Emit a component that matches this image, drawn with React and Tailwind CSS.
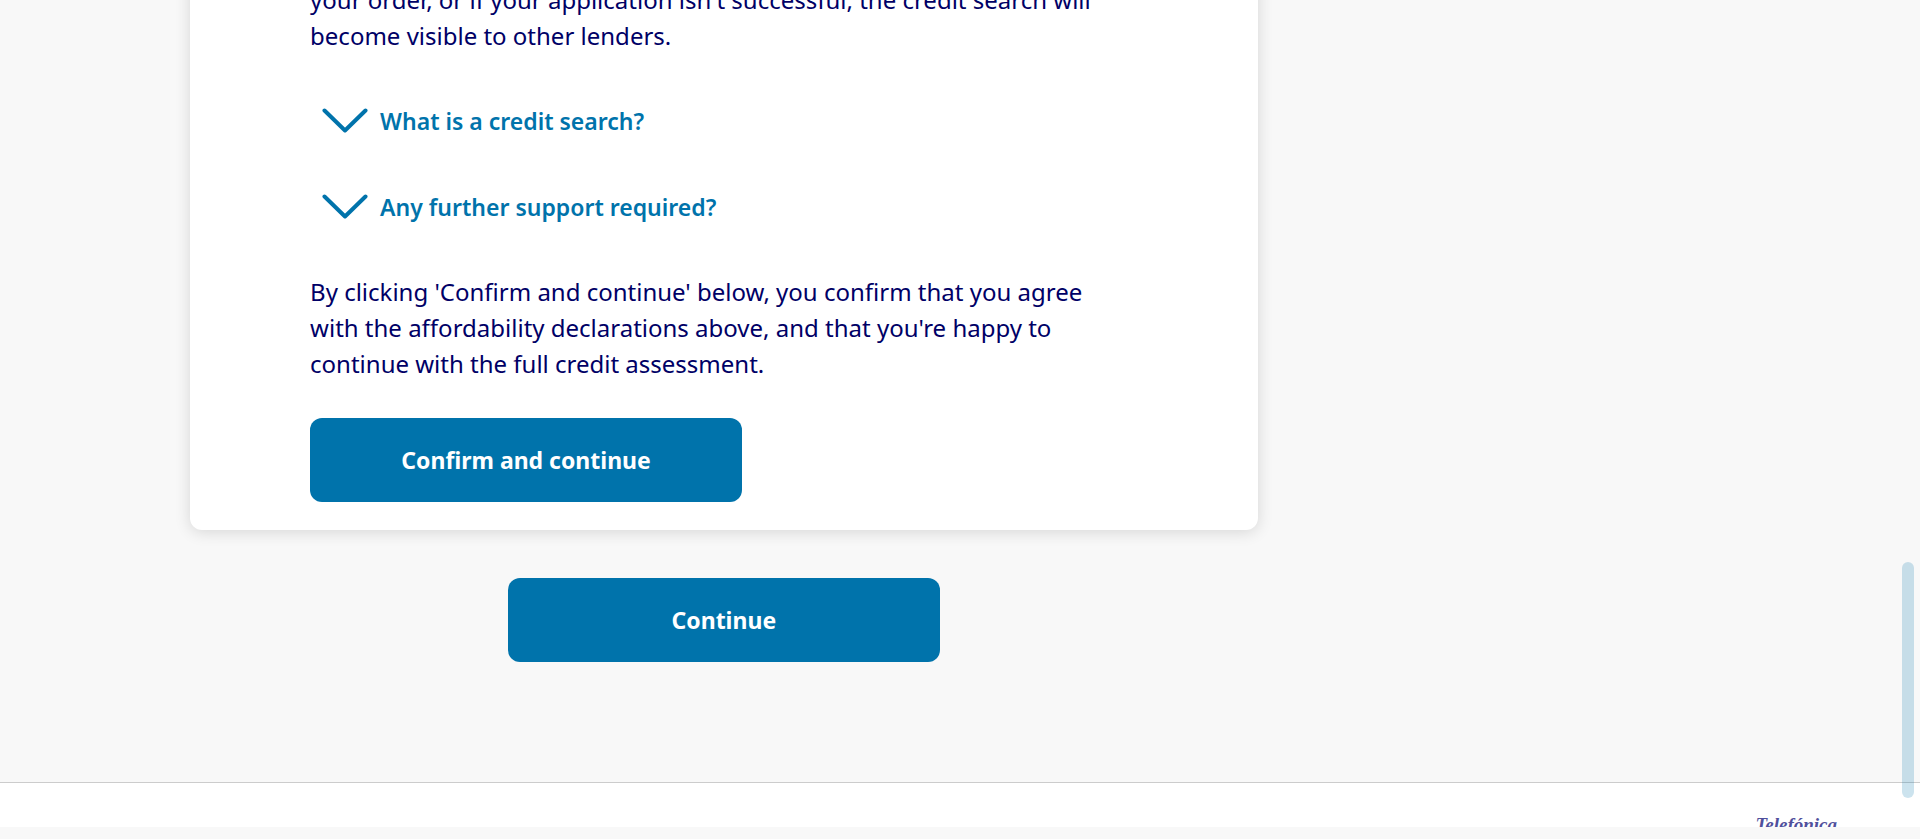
function Disclosure({ children }) {
  return (
    <button
      type="button"
      aria-expanded="false"
      className="flex h-[86px] items-center gap-3 self-start pl-3 text-left text-[23px] leading-9 font-semibold text-[#0073ab]"
    >
      <svg width="46" height="26" viewBox="0 0 46 26" fill="none" aria-hidden="true" className="shrink-0">
        <path
          d="M2.5 2.5 23 22.5 43.5 2.5"
          stroke="currentColor"
          strokeWidth="4"
          strokeLinecap="round"
          strokeLinejoin="round"
        />
      </svg>
      <span>{children}</span>
    </button>
  );
}

function PrimaryButton({ children }) {
  return (
    <button
      type="button"
      className="h-21 w-full max-w-[432px] rounded-xl bg-[#0073ab] text-[23px] leading-9 font-bold text-white"
    >
      {children}
    </button>
  );
}

export default function App() {
  return (
    <div className="relative flex min-h-screen flex-col overflow-hidden bg-[#f8f8f8] font-['Noto_Sans','Open_Sans',sans-serif] text-[24px] leading-9 text-[#000066]">
      <main className="grow pr-[34.5%] pb-[120px] pl-[9.9%]">
        <section className="-mt-[18px] flex flex-col rounded-b-xl bg-white pr-[148px] pb-7 pl-[120px] shadow-[0_2px_16px_rgba(0,0,0,0.14)]">
          <p className="mb-6">
            your order, or if your application isn't successful, the credit search will become visible to other lenders.
          </p>
          <Disclosure>What is a credit search?</Disclosure>
          <Disclosure>Any further support required?</Disclosure>
          <p className="mt-6 mb-9">
            By clicking 'Confirm and continue' below, you confirm that you agree with the affordability declarations
            above, and that you're happy to continue with the full credit assessment.
          </p>
          <PrimaryButton>Confirm and continue</PrimaryButton>
        </section>
        <div className="mt-12 flex justify-center">
          <PrimaryButton>Continue</PrimaryButton>
        </div>
      </main>
      <footer className="mb-3 flex h-[45px] items-start justify-end overflow-hidden border-t border-[#cccccc] bg-white pt-7 pr-[83px]">
        <span className="font-['Liberation_Serif',serif] text-[19px] leading-7 font-bold text-[#50509c] italic">
          Telefónica
        </span>
      </footer>
      <div className="absolute top-[562px] right-1.5 h-[236px] w-3 rounded-full bg-[#0073ab]/20" aria-hidden="true" />
    </div>
  );
}
